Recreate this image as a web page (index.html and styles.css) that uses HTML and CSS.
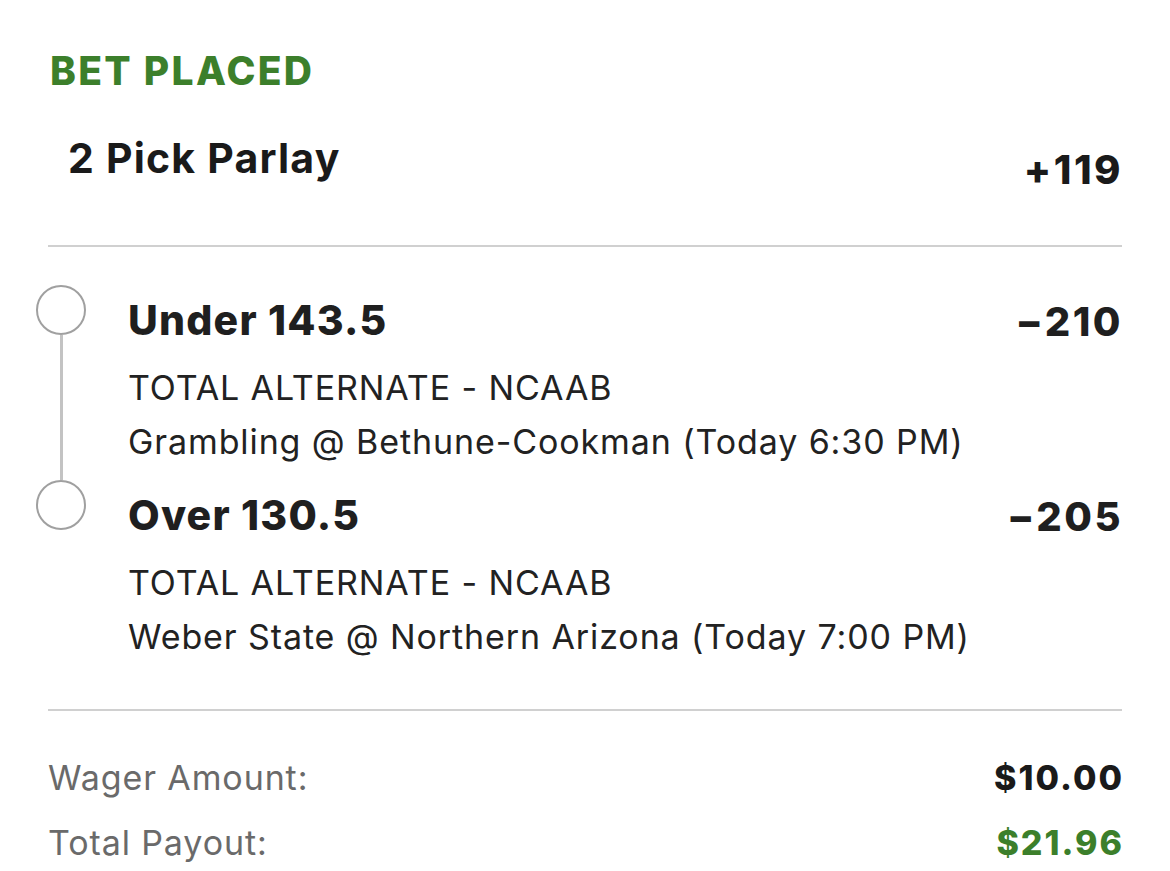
FILE: index.html
```html
<!DOCTYPE html>
<html>
<head>
<meta charset="utf-8">
<link rel="stylesheet" href="styles.css">
</head>
<body>
<div class="page">
  <div class="status">BET PLACED</div>
  <div class="parlay-row">
    <div class="parlay-title">2 Pick Parlay</div>
    <div class="parlay-odds">+119</div>
  </div>
  <div class="divider"></div>
  <div class="legs">
    <div class="leg">
      <div class="rail">
        <div class="dot"></div>
        <div class="connector"></div>
      </div>
      <div class="leg-body">
        <div class="leg-head">
          <div class="leg-title">Under 143.5</div>
          <div class="leg-odds">−210</div>
        </div>
        <div class="leg-line">TOTAL ALTERNATE - NCAAB</div>
        <div class="leg-line">Grambling @ Bethune-Cookman (Today 6:30 PM)</div>
      </div>
    </div>
    <div class="leg">
      <div class="rail">
        <div class="dot"></div>
      </div>
      <div class="leg-body">
        <div class="leg-head">
          <div class="leg-title">Over 130.5</div>
          <div class="leg-odds">−205</div>
        </div>
        <div class="leg-line">TOTAL ALTERNATE - NCAAB</div>
        <div class="leg-line">Weber State @ Northern Arizona (Today 7:00 PM)</div>
      </div>
    </div>
  </div>
  <div class="divider divider-bottom"></div>
  <div class="summary">
    <div class="summary-row">
      <div class="summary-label">Wager Amount:</div>
      <div class="summary-value">$10.00</div>
    </div>
    <div class="summary-row">
      <div class="summary-label">Total Payout:</div>
      <div class="summary-value payout">$21.96</div>
    </div>
  </div>
</div>
</body>
</html>
```

FILE: styles.css
```css
html, body {
  margin: 0;
  padding: 0;
  background: #ffffff;
}

body {
  font-family: Inter, "Noto Sans", "Liberation Sans", sans-serif;
  color: #1c1c1c;
}

.page {
  width: 1170px;
  height: 871px;
  box-sizing: border-box;
  padding: 46px 48px 0 48px;
  overflow: hidden;
}

.status {
  margin-left: 2px;
  font-size: 39px;
  line-height: 50px;
  font-weight: 800;
  letter-spacing: 2.3px;
  color: #3c7f2b;
}

.parlay-row {
  display: flex;
  justify-content: space-between;
  align-items: flex-start;
  margin-top: 37px;
  height: 62px;
}

.parlay-title {
  margin-left: 20px;
  font-size: 41px;
  line-height: 50px;
  font-weight: 700;
  letter-spacing: 1.2px;
  color: #1a1a1a;
}

.parlay-odds {
  margin-top: 12px;
  margin-right: -1px;
  font-size: 40px;
  line-height: 50px;
  font-weight: 800;
  letter-spacing: 2.5px;
  color: #1a1a1a;
}

.divider {
  height: 2px;
  background: #d0d0d0;
  margin-top: 50px;
}

.legs {
  display: flex;
  flex-direction: column;
  margin-top: 38px;
  margin-left: -12px;
}

.leg {
  display: flex;
}

.rail {
  width: 50px;
  flex: none;
  display: flex;
  flex-direction: column;
  align-items: center;
  margin-right: 42px;
}

.dot {
  width: 46px;
  height: 46px;
  border: 2px solid #a0a0a0;
  border-radius: 50%;
  flex: none;
}

.connector {
  flex: 1;
  width: 3px;
  background: #c3c3c3;
}

.leg-body {
  flex: 1;
  padding-top: 10px;
  padding-bottom: 11px;
}

.leg-head {
  display: flex;
  justify-content: space-between;
  align-items: flex-start;
  height: 50px;
  margin-bottom: 16px;
}

.leg-title {
  font-size: 41px;
  line-height: 50px;
  font-weight: 800;
  letter-spacing: 1.2px;
  color: #1f1f1f;
}

.leg-odds {
  padding-top: 3px;
  margin-right: -1px;
  font-size: 40px;
  line-height: 47px;
  font-weight: 800;
  letter-spacing: 2.5px;
  color: #1f1f1f;
}

.leg-line {
  font-size: 34px;
  line-height: 54px;
  font-weight: 400;
  letter-spacing: 0.9px;
  color: #222222;
}

.divider-bottom {
  margin-top: 34px;
}

.summary {
  display: flex;
  flex-direction: column;
  gap: 11px;
  margin-top: 40px;
}

.summary-row {
  display: flex;
  justify-content: space-between;
  align-items: center;
}

.summary-label {
  font-size: 34px;
  line-height: 54px;
  letter-spacing: 0.9px;
  color: #6a6a6a;
}

.summary-value {
  margin-right: -2px;
  font-size: 34px;
  line-height: 54px;
  font-weight: 800;
  letter-spacing: 2px;
  color: #1a1a1a;
}

.payout {
  color: #3c7f2b;
}
```
